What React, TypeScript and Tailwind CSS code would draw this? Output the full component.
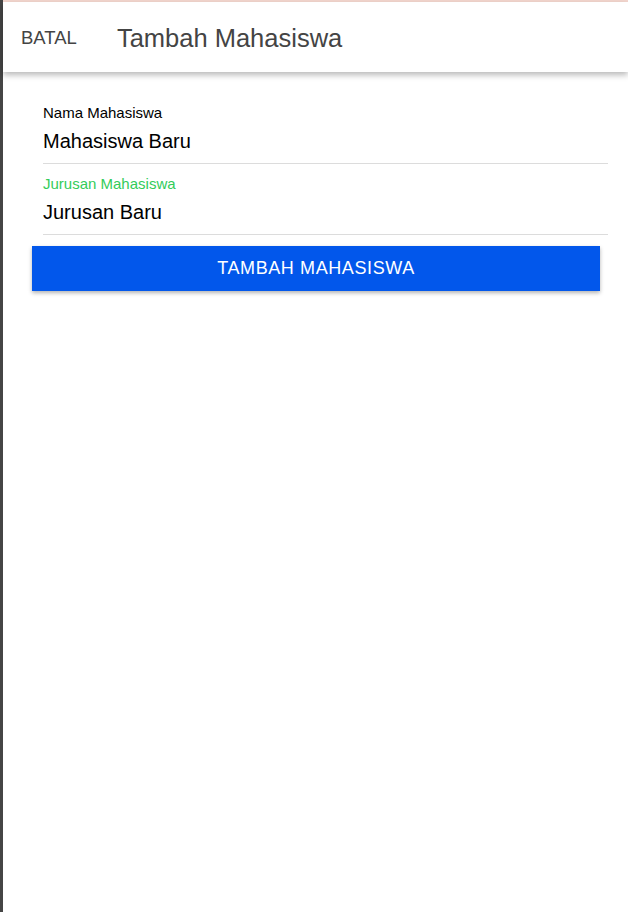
const fields = [
  { label: "Nama Mahasiswa", value: "Mahasiswa Baru", focused: false },
  { label: "Jurusan Mahasiswa", value: "Jurusan Baru", focused: true },
];

const App = () => {
  return (
    <div className="flex min-h-[912px] w-full bg-white font-['Liberation_Sans',Arial,sans-serif]">
      <div className="w-[3px] shrink-0 bg-[#454545]" />
      <div className="flex flex-1 flex-col">
        <div className="h-[2px] bg-[#f4d7cf]" />
        <header className="relative z-10 flex h-[70px] items-center bg-white shadow-[0_3px_6px_rgba(0,0,0,0.28)]">
          <button className="ml-[18px] mt-[1px] text-[18.5px] text-[#444]">BATAL</button>
          <h1 className="ml-[40px] mt-[3px] text-[25.5px] text-[#444]">Tambah Mahasiswa</h1>
        </header>

        <form className="flex flex-col pt-[21px]">
          {fields.map((f) => (
            <div
              key={f.label}
              className="ml-[40px] mr-[20px] flex flex-col border-b border-[#dcdcdc] pt-3 pb-[10px]"
            >
              <label
                className={
                  f.focused
                    ? "h-4 text-[15px] leading-4 text-[#33cc5a]"
                    : "h-4 text-[15px] leading-4 text-black"
                }
              >
                {f.label}
              </label>
              <input
                className="mt-2 h-6 text-[20px] leading-6 text-black outline-none"
                defaultValue={f.value}
              />
            </div>
          ))}

          <button
            type="button"
            className="mt-[11px] ml-[29px] mr-[28px] h-[45px] bg-[#0257eb] text-[18px] tracking-[0.6px] text-white shadow-[0_2px_4px_rgba(0,0,0,0.3)]"
          >
            TAMBAH MAHASISWA
          </button>
        </form>
      </div>
    </div>
  );
};

export default App;
